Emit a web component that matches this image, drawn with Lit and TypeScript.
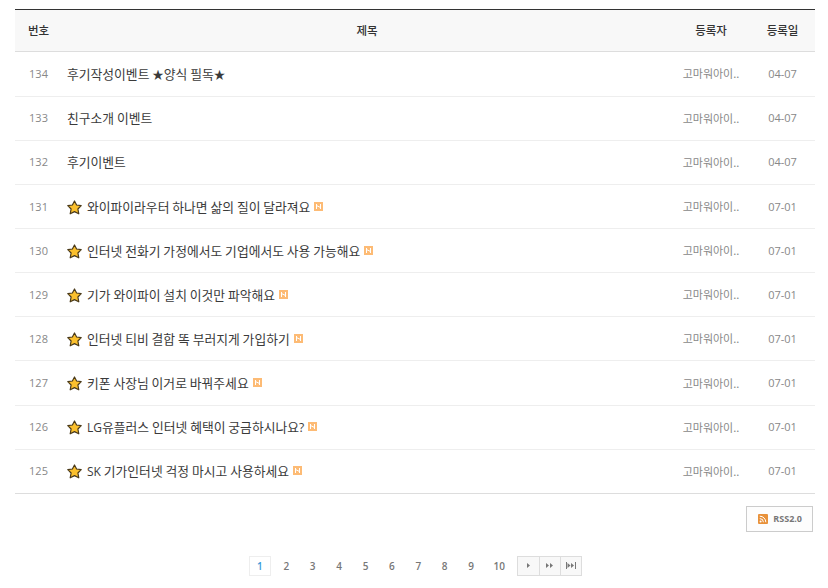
import { LitElement, html, css, svg } from "lit";
import { customElement } from "lit/decorators.js";

const rows: [number, string, string, boolean][] = [
  [134, "후기작성이벤트 ★양식 필독★", "04-07", false],
  [133, "친구소개 이벤트", "04-07", false],
  [132, "후기이벤트", "04-07", false],
  [131, "와이파이라우터 하나면 삶의 질이 달라져요", "07-01", true],
  [130, "인터넷 전화기 가정에서도 기업에서도 사용 가능해요", "07-01", true],
  [129, "기가 와이파이 설치 이것만 파악해요", "07-01", true],
  [128, "인터넷 티비 결합 똑 부러지게 가입하기", "07-01", true],
  [127, "키폰 사장님 이거로 바꿔주세요", "07-01", true],
  [126, "LG유플러스 인터넷 혜택이 궁금하시나요?", "07-01", true],
  [125, "SK 기가인터넷 걱정 마시고 사용하세요", "07-01", true],
];

const star = svg`<svg class="star" width="15" height="15" viewBox="0 0 15 15"><path d="M7.5 1 L9.6 5 L14.2 5.7 L10.9 9 L11.8 13.8 L7.5 11.6 L3.2 13.8 L4.1 9 L0.8 5.7 L5.4 5 Z" fill="#fbc02d" stroke="#4a3a1a" stroke-width="1.2" stroke-linejoin="round"/></svg>`;
const rss = svg`<svg width="10" height="10" viewBox="0 0 10 10"><rect width="10" height="10" rx="1" fill="#e8913a"/><circle cx="2.6" cy="7.4" r="1" fill="#fff"/><path d="M1.8 4.6a3.6 3.6 0 0 1 3.6 3.6M1.8 2.2a6 6 0 0 1 6 6" fill="none" stroke="#fff" stroke-width="1"/></svg>`;
const badge = svg`<svg class="new" width="9" height="9" viewBox="0 0 9 9"><rect width="9" height="9" fill="#fdbb75"/><path d="M2.5 2v5M6.5 2v5M2.5 3.5l4 2" stroke="#fff" stroke-width="1" fill="none"/></svg>`;
const tri = (x: number) => svg`<path d="M${x} 1 L${x + 3} 3.5 L${x} 6 Z" fill="#777"/>`;

const segs = (t: string) =>
  t.split(/([A-Za-z?]+|★)/).map((s) =>
    s === "★" ? html`<span class="sym">${s}</span>`
    : /^[A-Za-z?]+$/.test(s) ? html`<span class="lat">${s}</span>`
    : s);

@customElement("app-root")
export class AppRoot extends LitElement {
  static styles = css`
    :host {
      display: block;
      width: 828px;
      height: 588px;
      background: #fff;
      overflow: hidden;
      font-family: "Noto Sans CJK KR", "Open Sans", sans-serif;
      font-size: 12.8px;
      color: #333;
      box-sizing: border-box;
      padding: 9px 13px 0 15px;
    }
    .list { border-top: 1px solid #333; border-bottom: 1px solid #ddd; }
    .row {
      display: grid;
      grid-template-columns: 47px 610px 78px 65px;
      align-items: center;
      height: 42.45px;
      padding-bottom: 0.7px;
      border-top: 1px solid #eee;
    }
    .head {
      height: 40.5px;
      padding-bottom: 0;
      background: #f8f8f8;
      border-top: 0;
      border-bottom: 1px solid #ddd;
      font-size: 11.5px;
      color: #333;
      text-align: center;
      font-weight: 500;
    }
    .head + .row { border-top: 0; height: 43.45px; }
    .num, .writer, .date { text-align: center; color: #888; font-size: 11px; }
    .head .num, .head .writer, .head .date { color: #333; font-size: 11.5px; }
    .num, .date { font-family: "Open Sans", sans-serif; }
    .head .num, .head .date { font-family: inherit; }
    .title { padding-left: 5px; display: flex; align-items: center; color: #3a3a3a; white-space: pre; }
    .head .title { padding-left: 0; justify-content: center; color: #333; }
    .star { margin: 2px 5px 0 0; flex: none; }
    .new { flex: none; margin-left: 4px; }
    .sym { font-size: 11.5px; }
    .lat { font-family: "Open Sans", sans-serif; font-size: 12px; }
    .actions { display: flex; justify-content: flex-end; padding-top: 12px; margin-right: 2px; }
    .rss {
      display: flex; align-items: center; gap: 5px;
      height: 24px;
      padding: 0 10px 0 11px;
      border: 1px solid #ccc;
      background: #fdfdfd;
      font: bold 9px "Open Sans", sans-serif;
      color: #777;
    }
    .pager {
      display: flex; justify-content: center; align-items: center;
      margin-top: 24px;
      font: 600 10px "Open Sans", sans-serif;
      color: #777;
      height: 20px;
      width: 799px;
    }
    .pager a { width: 26.4px; height: 20px; display: flex; align-items: center; justify-content: center; box-sizing: border-box; }
    .pager a.on { width: 22px; margin: 0 2.2px; border: 1px solid #eee; color: #3b9ad9; }
    .pager a.ten { width: 30px; margin-right: 3px; }
    .btns { display: flex; border: 1px solid #ddd; background: #f8f8f8; }
    .btns span { box-sizing: border-box; width: 21px; height: 18px; display: flex; align-items: center; justify-content: center; border-left: 1px solid #ddd; }
    .btns span:first-child { border-left: 0; }
  `;

  render() {
    return html`
      <div class="list">
        <div class="row head">
          <div class="num">번호</div><div class="title">제목</div><div class="writer">등록자</div><div class="date">등록일</div>
        </div>
        ${rows.map(([n, t, d, hot]) => html`
          <div class="row">
            <div class="num">${n}</div>
            <div class="title">${hot ? star : ""}<span>${segs(t)}</span>${hot ? badge : ""}</div>
            <div class="writer">고마워아이..</div>
            <div class="date">${d}</div>
          </div>`)}
      </div>
      <div class="actions"><div class="rss">${rss}<span>RSS2.0</span></div></div>
      <div class="pager">
        <a class="on">1</a>${[2,3,4,5,6,7,8,9].map(n => html`<a>${n}</a>`)}<a class="ten">10</a>
        <div class="btns">
          <span><svg width="4" height="7" viewBox="0 0 4 7">${tri(0)}</svg></span>
          <span><svg width="8" height="7" viewBox="0 0 8 7">${tri(0)}${tri(4)}</svg></span>
          <span><svg width="11" height="7" viewBox="0 0 11 7"><rect width="1" height="7" fill="#777"/>${tri(1.5)}${tri(5)}<rect x="9" width="1" height="7" fill="#777"/></svg></span>
        </div>
      </div>
    `;
  }
}
